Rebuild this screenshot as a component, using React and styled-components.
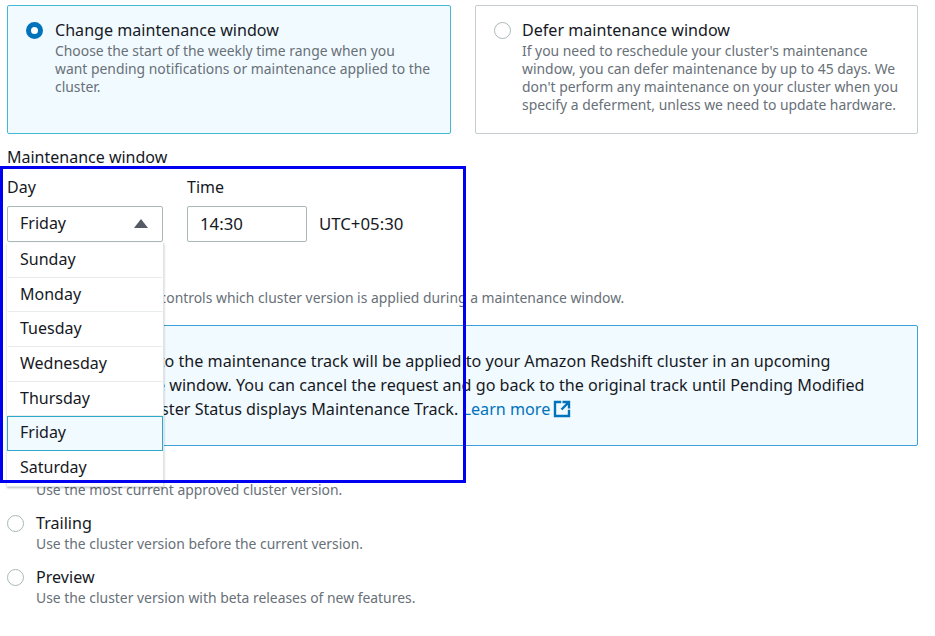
import React from "react";
import styled, { createGlobalStyle } from "styled-components";

const Global = createGlobalStyle`
  html, body { margin: 0; padding: 0; background: #fff; }
  body { font-family: "Noto Sans", "Open Sans", Arial, sans-serif; color: #16191f; }
`;

const Page = styled.div`
  position: relative;
  width: 935px;
  height: 636px;
  overflow: hidden;
  box-sizing: border-box;
  padding: 5px 17px 0 7px;
`;
const Cards = styled.div`
  display: grid;
  grid-template-columns: 444px 443px;
  gap: 24px;
`;
const Card = styled.div`
  box-sizing: border-box;
  height: 129px;
  display: flex;
  gap: ${(p) => (p.$selected ? 12 : 11)}px;
  padding: 14px 18px;
  border: 1px solid ${(p) => (p.$selected ? "#44b9d6" : "#c4cdcf")};
  border-radius: 2px;
  background: ${(p) => (p.$selected ? "#f1faff" : "#fff")};
`;
const Radio = styled.span`
  flex: none;
  box-sizing: border-box;
  width: 17px;
  height: 17px;
  margin-top: 2px;
  border-radius: 50%;
  border: ${(p) => (p.$on ? "5px solid #0073bb" : "1.5px solid #aab7b8")};
  background: #fff;
`;
const RadioText = styled.div`
  display: flex;
  flex-direction: column;
`;
const Title = styled.div`
  font-size: 16.1px;
  line-height: 20px;
`;
const Desc = styled.div`
  margin-top: 2px;
  font-size: 13.9px;
  line-height: 18px;
  color: #687078;
  white-space: nowrap;
`;
const SectionLabel = styled.div`
  margin-top: 13px;
  font-size: 16px;
  line-height: 20px;
`;
const FieldRow = styled.div`
  display: flex;
  gap: 24px;
  margin-top: 10px;
`;
const Field = styled.div`
  position: relative;
  display: flex;
  flex-direction: column;
  gap: 9px;
`;
const FieldLabel = styled.div`
  font-size: 16px;
  line-height: 20px;
`;
const Control = styled.div`
  box-sizing: border-box;
  width: ${(p) => p.$w}px;
  height: 36px;
  padding: 0 12px 2px;
  display: flex;
  align-items: center;
  justify-content: space-between;
  border: 1px solid #aab7b8;
  border-radius: 2px;
  font-size: ${(p) => p.$size || 16}px;
`;
const Caret = styled.span`
  width: 0;
  height: 0;
  margin-right: 2px;
  border-left: 7px solid transparent;
  border-right: 7px solid transparent;
  border-bottom: 9px solid #545b64;
`;
const TimeGroup = styled.div`
  display: flex;
  align-items: center;
  gap: 12px;
`;
const Zone = styled.span`
  font-size: 16.8px;
  padding-bottom: 1px;
`;
const Menu = styled.div`
  position: absolute;
  z-index: 2;
  left: 0;
  top: 66px;
  width: 157px;
  box-sizing: border-box;
  background: #fff;
  border: 1px solid #e1e4e5;
  border-top: 0;
  box-shadow: 0 1px 2px rgba(0, 28, 36, 0.3);
`;
const Option = styled.div`
  box-sizing: border-box;
  height: 34.7px;
  padding: 0 12px 3px;
  display: flex;
  align-items: center;
  font-size: 16px;
  border: 1px solid ${(p) => (p.$active ? "#2ea9cc" : "transparent")};
  border-bottom-color: ${(p) => (p.$active ? "#2ea9cc" : "#eaeded")};
  background: ${(p) => (p.$active ? "#f1faff" : "#fff")};
  margin-left: -1px;
  &:last-child { border-bottom-color: transparent; }
`;
const TrackHeading = styled.div`
  margin-top: 17px;
  font-size: 16px;
  line-height: 20px;
`;
const TrackDesc = styled(Desc)`
  margin-top: 10px;
`;
const Info = styled.div`
  box-sizing: border-box;
  height: 121px;
  margin-top: 18px;
  padding: 23px 24px 24px 58px;
  font-size: 16.15px;
  line-height: 24px;
  white-space: nowrap;
  border: 1px solid #3f9fdb;
  border-radius: 2px;
  background: #f1faff;
`;
const Learn = styled.a`
  color: #0073bb;
  display: inline-flex;
  align-items: center;
  gap: 3px;
`;
const Options = styled.div`
  display: flex;
  flex-direction: column;
  gap: 14px;
  margin-top: 13px;
`;
const TrackOption = styled.div`
  display: flex;
  gap: 12px;
`;
const Annotation = styled.div`
  position: absolute;
  z-index: 3;
  left: 0;
  top: 166px;
  width: 466px;
  height: 317px;
  box-sizing: border-box;
  border: 3px solid #0000f0;
  pointer-events: none;
`;

const days = ["Sunday", "Monday", "Tuesday", "Wednesday", "Thursday", "Friday", "Saturday"];

const External = () => (
  <svg width="18" height="18" viewBox="0 0 18 18" fill="none" stroke="#0073bb" strokeWidth="2.4">
    <path d="M7 2H2v14h14v-5" strokeLinecap="square" />
    <path d="M8.500 9.500L15.500 2.500M9.500 2H16V8.500" />
  </svg>
);

const tracks = [
  ["Current", "Use the most current approved cluster version."],
  ["Trailing", "Use the cluster version before the current version."],
  ["Preview", "Use the cluster version with beta releases of new features."],
];

export default function App() {
  return (
    <Page>
      <Global />
      <Cards>
        <Card $selected>
          <Radio $on />
          <RadioText>
            <Title>Change maintenance window</Title>
            <Desc>
              Choose the start of the weekly time range when you
              <br />
              want pending notifications or maintenance applied to the
              <br />
              cluster.
            </Desc>
          </RadioText>
        </Card>
        <Card>
          <Radio />
          <RadioText>
            <Title>Defer maintenance window</Title>
            <Desc>
              If you need to reschedule your cluster's maintenance
              <br />
              window, you can defer maintenance by up to 45 days. We
              <br />
              don't perform any maintenance on your cluster when you
              <br />
              specify a deferment, unless we need to update hardware.
            </Desc>
          </RadioText>
        </Card>
      </Cards>
      <SectionLabel>Maintenance window</SectionLabel>
      <FieldRow>
        <Field>
          <FieldLabel>Day</FieldLabel>
          <Control $w={156}>
            Friday
            <Caret />
          </Control>
          <Menu>
            {days.map((d) => (
              <Option key={d} $active={d === "Friday"}>
                {d}
              </Option>
            ))}
          </Menu>
        </Field>
        <Field>
          <FieldLabel>Time</FieldLabel>
          <TimeGroup>
            <Control $w={120} $size={16.8}>14:30</Control>
            <Zone>UTC+05:30</Zone>
          </TimeGroup>
        </Field>
      </FieldRow>
      <TrackHeading>Maintenance track</TrackHeading>
      <TrackDesc>
        The maintenance track controls which cluster version is applied during a maintenance window.
      </TrackDesc>
      <Info>
        Any change to the maintenance track will be applied to your Amazon Redshift cluster in an upcoming
        <br />
        maintenance window. You can cancel the request and go back to the original track until Pending Modified
        <br />
        values in Cluster Status displays Maintenance Track.{" "}
        <Learn>
          Learn more <External />
        </Learn>
      </Info>
      <Options>
        {tracks.map(([t, d]) => (
          <TrackOption key={t}>
            <Radio />
            <RadioText>
              <Title>{t}</Title>
              <Desc>{d}</Desc>
            </RadioText>
          </TrackOption>
        ))}
      </Options>
      <Annotation />
    </Page>
  );
}
